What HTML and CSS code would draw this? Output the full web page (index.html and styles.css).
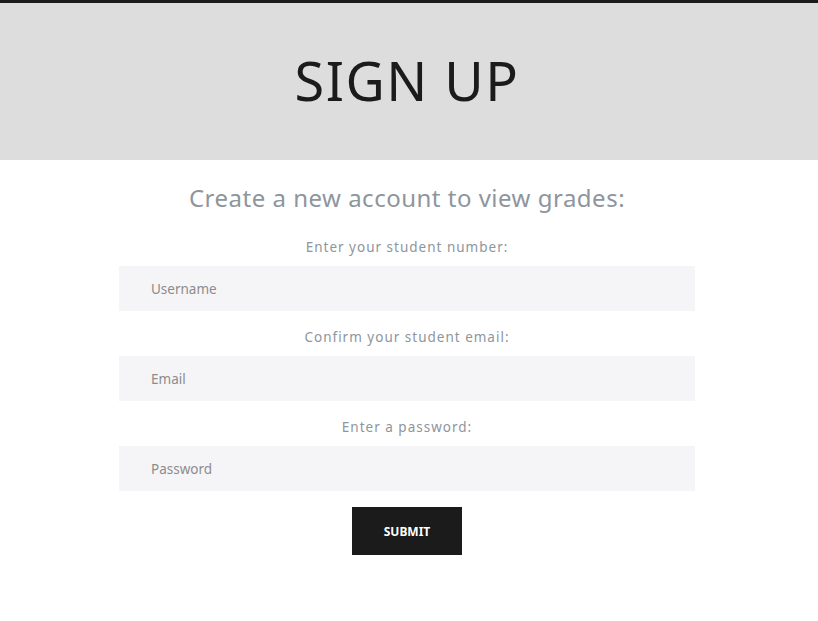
FILE: index.html
```html
<!DOCTYPE html>
<html>
<head>
<meta charset="utf-8">
<link rel="stylesheet" href="styles.css">
</head>
<body>
<header class="hero">
  <h1 class="title">SIGN UP</h1>
</header>
<main class="content">
  <h2 class="subtitle">Create a new account to view grades:</h2>
  <form class="form">
    <label class="label">Enter your student number:</label>
    <input class="field" type="text" placeholder="Username">
    <label class="label">Confirm your student email:</label>
    <input class="field" type="email" placeholder="Email">
    <label class="label">Enter a password:</label>
    <input class="field" type="password" placeholder="Password">
    <button class="submit" type="button">SUBMIT</button>
  </form>
</main>
</body>
</html>
```
FILE: styles.css
```css
* { box-sizing: border-box; }
body {
  margin: 0;
  background: #fff;
  font-family: "Noto Sans", sans-serif;
}
.hero {
  border-top: 3px solid #1b1b1b;
  background: #dddddd;
  height: 160px;
  display: flex;
  align-items: center;
  justify-content: center;
  padding-right: 4px;
  padding-bottom: 3px;
}
.title {
  margin: 0;
  font-weight: 400;
  font-size: 54px;
  letter-spacing: 1.5px;
  color: #1b1b1b;
  line-height: 1;
}
.content {
  padding-right: 4px;
  display: flex;
  flex-direction: column;
  align-items: center;
}
.subtitle {
  margin: 22px 0 0;
  font-weight: 400;
  font-size: 24px;
  line-height: 32px;
  color: #8e959d;
  letter-spacing: 0.5px;
}
.form {
  width: 576px;
  display: flex;
  flex-direction: column;
  align-items: center;
  margin-top: 23px;
}
.label {
  font-size: 13.5px;
  letter-spacing: 1px;
  color: #8e959d;
  line-height: 20px;
  margin-bottom: 9px;
}
.field {
  width: 100%;
  height: 45px;
  border: none;
  background: #f5f5f7;
  padding: 0 32px;
  font-family: inherit;
  font-size: 13.5px;
  color: #555;
  margin-bottom: 16px;
  outline: none;
}
.field::placeholder { color: #8c8c8c; }
.submit {
  width: 110px;
  height: 48px;
  border: none;
  background: #1b1b1b;
  color: #fff;
  font-family: inherit;
  font-weight: 700;
  font-size: 12px;
  letter-spacing: 0;
}
```
